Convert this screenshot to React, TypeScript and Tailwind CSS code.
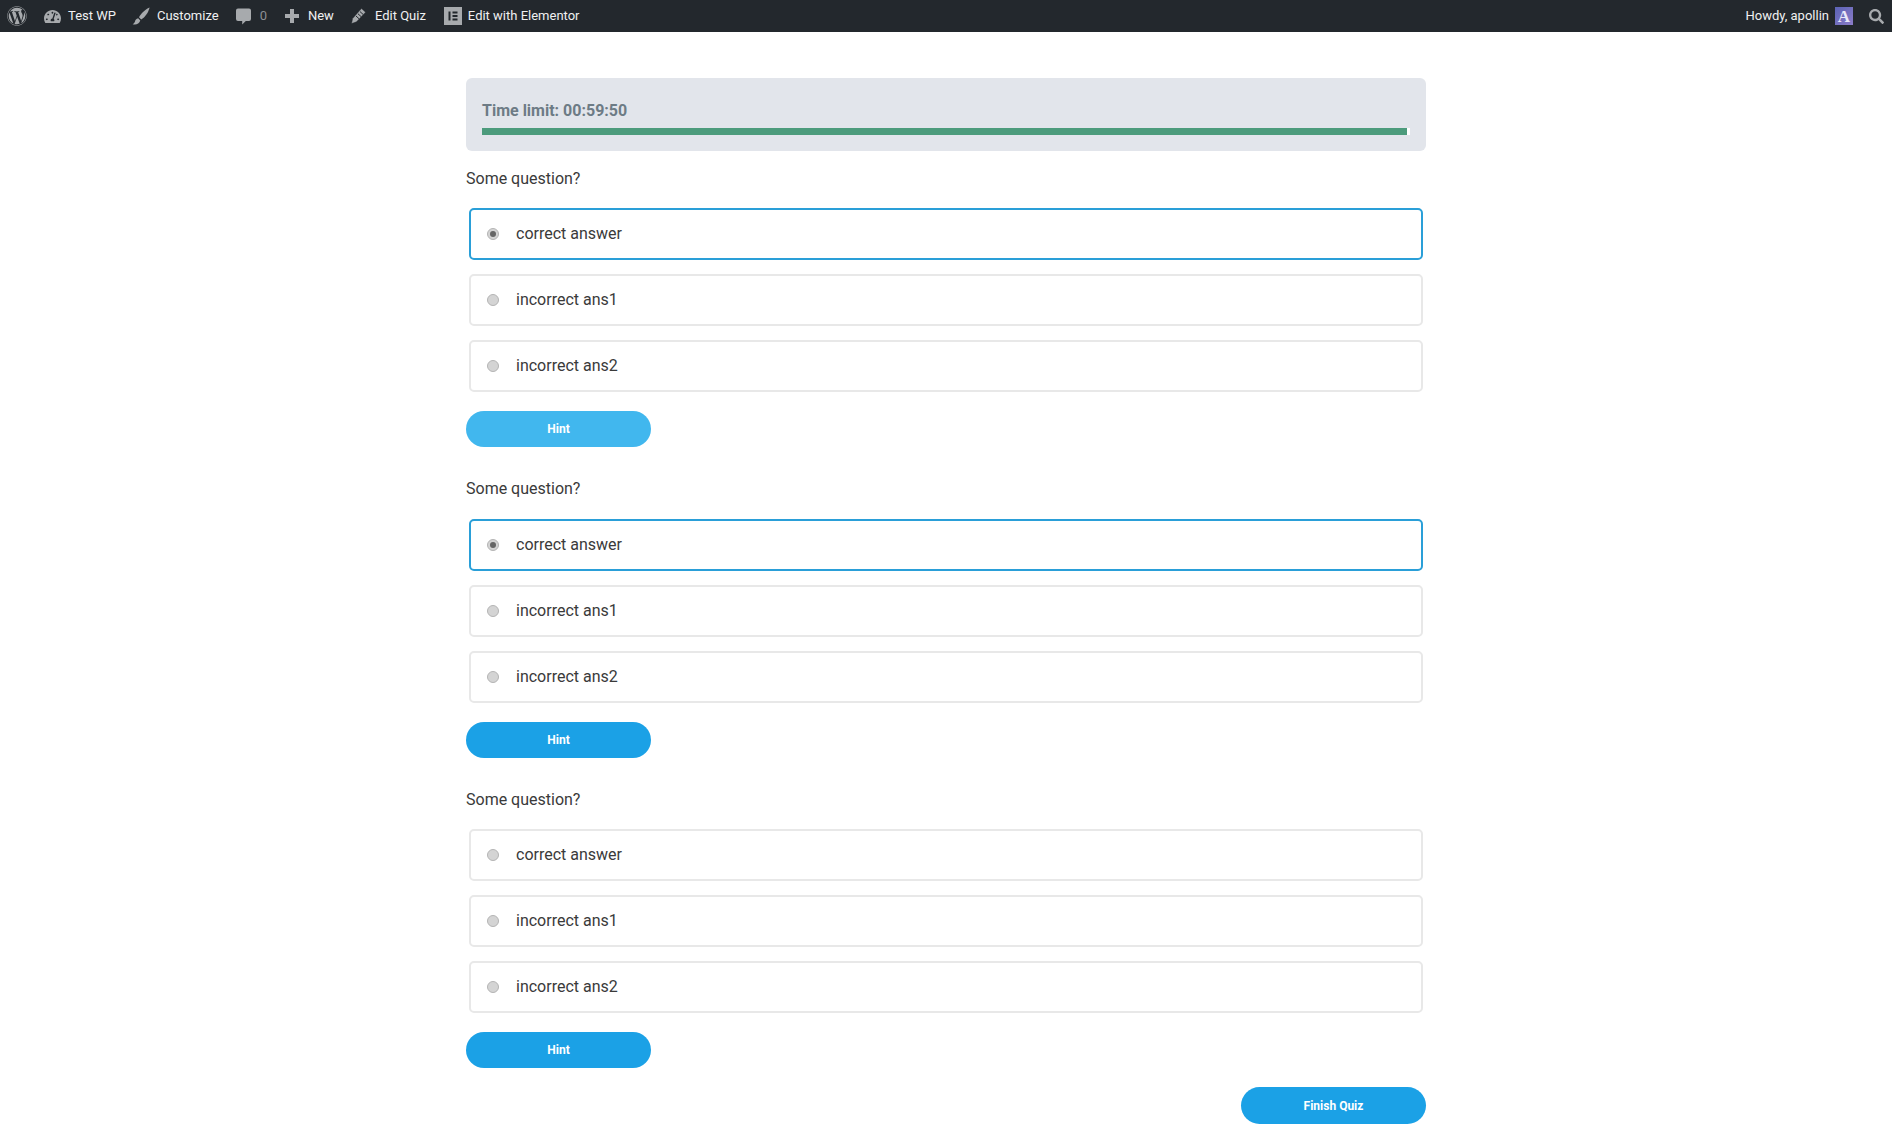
import { FaWordpress, FaTachometerAlt, FaSearch } from "react-icons/fa";
import type { ReactNode } from "react";

const BrushIcon = () => (
  <svg width="18" height="18" viewBox="0 0 18 18" fill="currentColor">
    <path d="M17.6 .6C13.2 2.6 8.9 6.6 7 10.3l2.2 2.1C13 10.6 16.4 5.6 17.6 .6Z" />
    <path d="M6.2 11.2c-2 .4-2.8 1.7-3.2 3.2-.3.9-1.2 2-2.4 2.8 2.8.9 6.6.3 7.7-3.6Z" />
  </svg>
);

const CommentIcon = () => (
  <svg width="15" height="18" viewBox="0 0 15 18" fill="currentColor">
    <path d="M2 1.5h11a2 2 0 0 1 2 2v8.5a2 2 0 0 1-2 2h-3.2L6.2 17.6V14H2a2 2 0 0 1-2-2V3.5a2 2 0 0 1 2-2Z" />
  </svg>
);

const PlusIcon = () => (
  <svg width="14" height="14" viewBox="0 0 14 14" fill="currentColor">
    <rect x="5" y="0" width="4" height="14" />
    <rect x="0" y="5" width="14" height="4" />
  </svg>
);

const PencilIcon = () => (
  <svg width="15" height="16" viewBox="0 0 15 16" fill="currentColor" stroke="#23282d">
    <path d="M10.5 .6l4 3.6-9 9.6L.6 15.6l1-5Z" strokeWidth="0.4" />
    <path d="M9 3.6l3.2 2.9M7 5.8l3.2 2.9M5 8l3.2 2.9" strokeWidth="1" />
  </svg>
);

const BarItem = ({ icon, label, muted }: { icon: ReactNode; label: string; muted?: boolean }) => (
  <div className="flex items-center gap-[6px] pl-[8px] pr-[7px] h-full">
    <span className="flex items-center justify-center w-[20px] text-[#a7aaad]">{icon}</span>
    <span className={muted ? "text-[#8c8f94]" : "text-[#f0f0f1]"}>{label}</span>
  </div>
);

const AdminBar = () => (
  <div className="flex items-center justify-between h-[32px] bg-[#23282d] text-[13px] leading-[32px]">
    <div className="flex items-center h-full pl-[7px]">
      <FaWordpress className="w-[20px] h-[20px] text-[#a7aaad] mr-[7px]" />
      <BarItem icon={<FaTachometerAlt size={17} />} label="Test WP" />
      <BarItem icon={<BrushIcon />} label="Customize" />
      <BarItem icon={<CommentIcon />} label="0" muted />
      <BarItem icon={<PlusIcon />} label="New" />
      <BarItem icon={<PencilIcon />} label="Edit Quiz" />
      <div className="flex items-center gap-[6px] pl-[11px] h-full">
        <span className="flex items-center justify-center w-[18px] h-[18px] bg-[#a7aaad]">
          <svg width="10" height="10" viewBox="0 0 10 10" fill="#23282d">
            <rect x="0.5" y="0.5" width="2" height="9" />
            <rect x="4.5" y="0.5" width="5" height="2" />
            <rect x="4.5" y="4" width="5" height="2" />
            <rect x="4.5" y="7.5" width="5" height="2" />
          </svg>
        </span>
        <span className="text-[#f0f0f1]">Edit with Elementor</span>
      </div>
    </div>
    <div className="flex items-center h-full pr-[8px]">
      <span className="text-[#f0f0f1] mr-[6px]">Howdy, apollin</span>
      <span className="flex items-center justify-center w-[18px] h-[18px] bg-gradient-to-br from-[#5b63b5] to-[#8b7cc8] text-[#e8e8f8] text-[17px] font-bold font-['Liberation_Serif',serif] leading-none mr-[16px]">A</span>
      <FaSearch size={15} className="text-[#a7aaad]" />
    </div>
  </div>
);

const Answer = ({ label, selected }: { label: string; selected?: boolean }) => (
  <label className={`flex items-center h-[52px] mx-[3px] pl-[16px] rounded-[5px] border-2 bg-white ${selected ? "border-[#2a9fd8]" : "border-[#e8e8e8]"}`}>
    <span className="flex items-center justify-center w-[12px] h-[12px] rounded-full bg-[#d4d4d4] border border-[#b4b4b4]">
      {selected && <span className="w-[6px] h-[6px] rounded-full bg-[#666666]" />}
    </span>
    <span className="ml-[17px] text-[16px] text-[#3a3a3a]">{label}</span>
  </label>
);

const Question = ({ selected, light }: { selected?: boolean; light?: boolean }) => (
  <div className="flex flex-col">
    <p className="text-[16px] leading-[24px] text-[#3a3a3a] mb-[17.5px]">Some question?</p>
    <div className="flex flex-col gap-[14px]">
      <Answer label="correct answer" selected={selected} />
      <Answer label="incorrect ans1" />
      <Answer label="incorrect ans2" />
    </div>
    <button className={`mt-[19px] w-[185px] h-[36px] rounded-full text-white text-[12px] font-bold ${light ? "bg-[#41b7ee]" : "bg-[#1ba1e6]"}`}>Hint</button>
  </div>
);

export default function App() {
  return (
    <div className="min-h-[1134px] bg-white font-['Roboto',sans-serif]">
      <AdminBar />
      <div className="w-[960px] mx-auto pt-[46px]">
        <div className="h-[73px] rounded-[6px] bg-[#e2e5eb] px-[16px] pt-[21px]">
          <div className="text-[16px] font-bold leading-[24px] text-[#6d7b85]">Time limit: 00:59:50</div>
          <div className="mt-[5px] w-[928px] h-[7px] bg-white">
            <div className="w-[925px] h-full bg-[#4c9b7c]" />
          </div>
        </div>
        <div className="mt-[15.8px] flex flex-col gap-[30px]">
          <Question selected light />
          <Question selected />
          <Question />
        </div>
        <div className="flex justify-end mt-[19px]">
          <button className="w-[185px] h-[37px] rounded-full bg-[#1ba1e6] text-white text-[12px] font-bold">Finish Quiz</button>
        </div>
      </div>
    </div>
  );
}
